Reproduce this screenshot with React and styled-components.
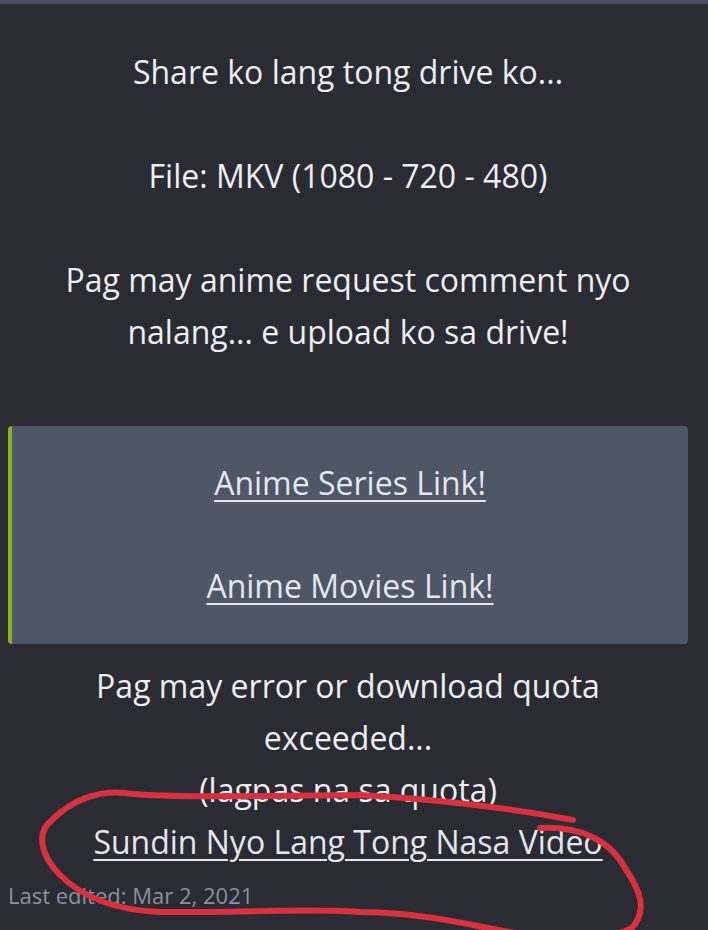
import React from "react";
import styled, { createGlobalStyle } from "styled-components";

const Global = createGlobalStyle`
  html, body { margin: 0; padding: 0; background: #2b2c33; }
  body { font-family: "Open Sans", "Noto Sans", sans-serif; }
`;

const Page = styled.div`
  position: relative;
  width: 708px;
  height: 930px;
  overflow: hidden;
  background: #2b2c33;
  border-top: 4px solid #4a4e5c;
  box-sizing: border-box;
`;

const Post = styled.article`
  padding: 42px 20px 0 8px;
  color: #eceef2;
  font-size: 32px;
  line-height: 52px;
  text-align: center;
`;

const Para = styled.p`
  margin: 0 0 ${(p) => p.$gap ?? 52}px;
`;

const Spoiler = styled.div`
  background: #4f5666;
  border-left: 4px solid #86b817;
  border-radius: 4px;
  padding: 31px 0 32px;
  margin: 0 0 16px;
  display: flex;
  flex-direction: column;
  gap: 51px;
`;

const Link = styled.a`
  color: #e3e6ef;
  text-decoration: underline;
  text-underline-offset: 5px;
  text-decoration-thickness: 2px;
`;

const Edited = styled.div`
  margin-top: 12px;
  font-size: 22px;
  line-height: 30px;
  color: #8b909c;
  text-align: left;
`;

const Scribble = styled.svg`
  position: absolute;
  left: 0;
  top: -4px;
  width: 708px;
  height: 930px;
  pointer-events: none;
`;

export default function App() {
  return (
    <>
      <Global />
      <Page>
        <Post>
          <Para>Share ko lang tong drive ko...</Para>
          <Para>File: MKV (1080 - 720 - 480)</Para>
          <Para $gap={68}>
            Pag may anime request comment nyo
            <br />
            nalang... e upload ko sa drive!
          </Para>
          <Spoiler>
            <div>
              <Link href="#">Anime Series Link!</Link>
            </div>
            <div>
              <Link href="#">Anime Movies Link!</Link>
            </div>
          </Spoiler>
          <Para $gap={0}>
            Pag may error or download quota
            <br />
            exceeded...
            <br />
            (lagpas na sa quota)
            <br />
            <Link href="#">Sundin Nyo Lang Tong Nasa Video</Link>
          </Para>
          <Edited>Last edited: Mar 2, 2021</Edited>
        </Post>
        <Scribble viewBox="0 0 708 930">
          <path
            d="M540 828 C 580 826, 610 840, 625 868 C 640 890, 648 910, 632 928 C 600 945, 520 935, 483 927 C 440 918, 400 912, 360 912 C 300 908, 240 913, 160 912 C 110 910, 80 895, 60 875 C 40 855, 36 832, 52 820 C 72 800, 98 790, 125 793 C 160 798, 250 796, 360 795 C 450 800, 520 810, 573 820"
            fill="none"
            stroke="#d8303e"
            strokeWidth="6"
            strokeLinecap="round"
            strokeLinejoin="round"
          />
        </Scribble>
      </Page>
    </>
  );
}
